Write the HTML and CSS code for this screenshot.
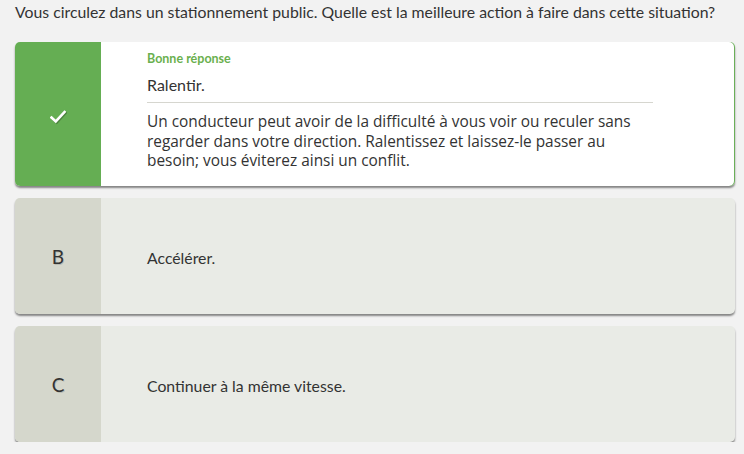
FILE: index.html
```html
<!DOCTYPE html>
<html lang="fr">
<head>
<meta charset="utf-8">
<link rel="stylesheet" href="styles.css">
</head>
<body>
<div class="page">
  <p class="question">Vous circulez dans un stationnement public. Quelle est la meilleure action à faire dans cette situation?</p>
  <div class="answers">
    <div class="card correct">
      <div class="marker">
        <svg class="check" width="16" height="14" viewBox="0 0 16 14"><path d="M1.5 7.5 L5.8 11.5 L14.5 2" fill="none" stroke="#fff" stroke-width="2.6" stroke-linecap="square"/></svg>
      </div>
      <div class="body">
        <div class="label">Bonne réponse</div>
        <div class="answer-text">Ralentir.</div>
        <div class="explanation">Un conducteur peut avoir de la difficulté à vous voir ou reculer sans regarder dans votre direction. Ralentissez et laissez-le passer au besoin; vous éviterez ainsi un conflit.</div>
      </div>
    </div>
    <div class="card option">
      <div class="marker"><span class="letter">B</span></div>
      <div class="body"><div class="answer-text small">Accélérer.</div></div>
    </div>
    <div class="card option">
      <div class="marker"><span class="letter">C</span></div>
      <div class="body"><div class="answer-text small">Continuer à la même vitesse.</div></div>
    </div>
  </div>
</div>
</body>
</html>
```

FILE: styles.css
```css
html, body {
  margin: 0;
  padding: 0;
  background: #f2f2f2;
}
.page {
  padding: 2px 9px 0 15px;
  font-family: Lato, "Liberation Sans", sans-serif;
  color: #333;
}
.question {
  margin: 0;
  font-size: 15.8px;
  line-height: 20px;
  color: #333;
}
.answers {
  margin-top: 20px;
  display: flex;
  flex-direction: column;
  gap: 12px;
}
.card {
  display: grid;
  grid-template-columns: 86px 1fr;
  border-radius: 5px;
  overflow: hidden;
  box-shadow: 0 2px 2px rgba(0, 0, 0, 0.45);
}
.correct {
  background: #fff;
  height: 144px;
  box-shadow: 0 2px 2px rgba(0, 0, 0, 0.45), inset -1px 0 0 #6aaf59;
}
.correct .marker {
  background: #65ae53;
  display: flex;
  align-items: center;
  justify-content: center;
  padding-top: 5px;
}
.check {
  filter: drop-shadow(1px 1px 0 rgba(0,0,0,0.25));
}
.option {
  background: #e9ebe6;
  height: 116px;
}
.option .marker {
  background: #d5d7cc;
  display: flex;
  align-items: center;
  justify-content: center;
}
.letter {
  font-size: 19px;
  color: #333;
  text-shadow: 1px 1px 0 rgba(0,0,0,0.12);
}
.body {
  padding: 9px 82px 0 46px;
  display: flex;
  flex-direction: column;
}
.label {
  font-size: 12.5px;
  font-weight: 700;
  line-height: 14px;
  color: #6ab04e;
  margin-top: 1px;
}
.answer-text {
  font-size: 16px;
  line-height: 20px;
  color: #333;
  margin-top: 9px;
  padding-bottom: 7px;
  border-bottom: 1px solid #d6d6cf;
}
.answer-text.small {
  margin: 0;
  padding: 0;
  border: 0;
  font-size: 15.8px;
}
.option .body {
  padding: 4px 20px 0 46px;
  justify-content: center;
}
.explanation {
  margin-top: 9px;
  font-family: "Open Sans", "Noto Sans", sans-serif;
  font-size: 15.4px;
  line-height: 19.5px;
  color: #333;
}
```
